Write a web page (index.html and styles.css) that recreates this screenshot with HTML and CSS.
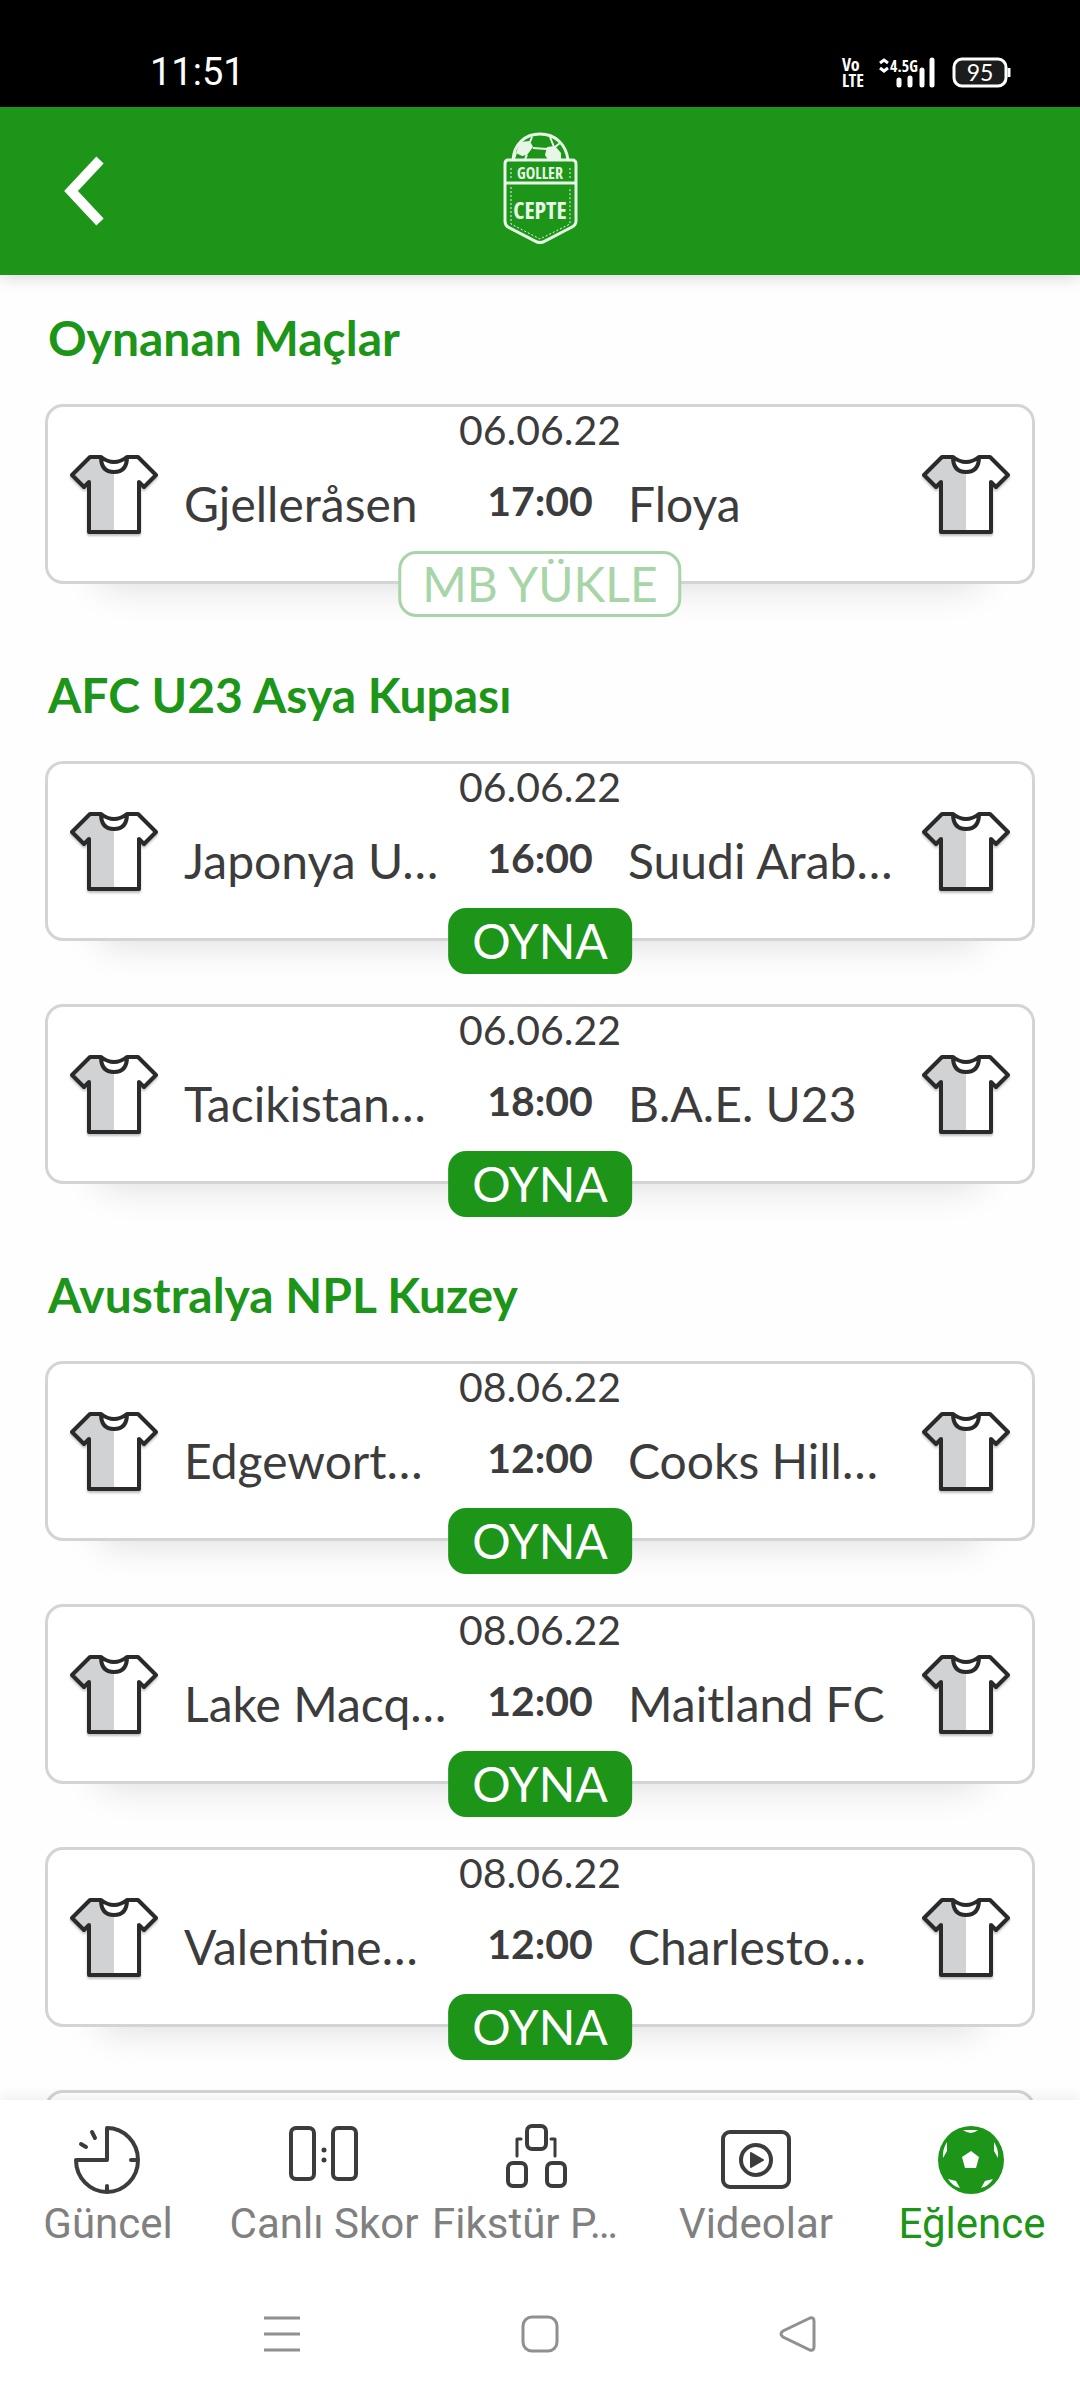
FILE: index.html
```html
<!DOCTYPE html>
<html lang="tr">
  <head>
    <meta charset="UTF-8" />
    <meta name="viewport" content="width=device-width, initial-scale=1.0" />
    <title>Goller Cepte</title>
    <link rel="stylesheet" href="styles.css" />
  </head>

  <body>
    <div class="status-bar">
      <span class="clock">11:51</span>
      <div class="status-icons">
        <span class="volte"><b>Vo</b><b>LTE</b></span>
        <svg class="signal" width="58" height="32" viewBox="0 0 58 32">
          <path d="M2 7 6 4 10 7M2 12 6 15 10 12" fill="none" stroke="#fff" stroke-width="3" />
          <text x="12" y="16" class="signal-text">4.5G</text>
          <path d="M21 24v5M32 22v7M44 14v15M54 4v25" stroke="#fff" stroke-width="5" stroke-linecap="round" />
        </svg>
        <svg class="battery" width="60" height="32" viewBox="0 0 60 32">
          <rect x="3" y="3" width="52" height="27" rx="8" fill="#1c1c1c" stroke="#fff" stroke-width="3" />
          <path d="M58 12v9" stroke="#fff" stroke-width="3" />
          <text x="29" y="25" class="battery-text">95</text>
        </svg>
      </div>
    </div>

    <header>
      <button class="back" aria-label="Geri">
        <svg width="40" height="72" viewBox="0 0 40 72">
          <path d="M36 5 7 36 36 67" fill="none" stroke="#fff" stroke-width="10" />
        </svg>
      </button>
      <svg class="logo" width="76" height="114" viewBox="0 0 76 114">
        <g fill="none" stroke="#e8f6e8" stroke-width="3">
          <path d="M11 29C12 13 23 3 38 3s26 10 28 26" />
          <path d="M6 29h64q4 0 4 4v57q0 4-4 6l-29 15q-3 1-6 0L6 96q-3-2-3-6V33q0-4 3-4zM3 52h70" />
          <path d="M9 37v12M68 37v12M9 56v37l29 15 30-15V56" stroke-width="1" stroke-dasharray="2 2" />
          <path d="M28 11l2-5M48 6l4 10M31 17l14 1M25 24l-2 4M14 22l-2 6M53 16l5-4" stroke-width="2" />
        </g>
        <path d="M18 11 28 10l3 6-6 8-5 1-6-3zM45 16l8-1 6 7v7H46l-3-5z" fill="#e8f6e8" />
        <text x="38" y="48" class="logo-small">GOLLER</text>
        <text x="38" y="88" class="logo-big">CEPTE</text>
      </svg>
    </header>

    <main id="matches"></main>

    <div class="bottom">
      <nav class="tabs">
        <a href="#guncel">
          <svg width="72" height="72" viewBox="0 0 72 72">
            <path d="M35 4A31 32 0 1 1 4 36H35ZM35 68v-6M66 36h-7M20 8l3 6M9 20l5 3" />
          </svg>
          <span>Güncel</span>
        </a>
        <a href="#canli">
          <svg width="72" height="72" viewBox="0 0 72 72">
            <rect x="3" y="4" width="23" height="51" rx="5" />
            <rect x="45" y="4" width="23" height="51" rx="5" />
            <path d="M36 26v0M36 36v0" stroke-width="5" />
          </svg>
          <span>Canlı Skor</span>
        </a>
        <a href="#fikstur">
          <svg width="72" height="72" viewBox="0 0 72 72">
            <rect x="23" y="2" width="19" height="23" rx="5" />
            <rect x="4" y="39" width="18" height="23" rx="5" />
            <rect x="43" y="39" width="18" height="23" rx="5" />
            <path d="M17 15h-4v17M47 15h4v17" stroke-width="3" />
          </svg>
          <span class="long">Fikstür P…</span>
        </a>
        <a href="#videolar">
          <svg width="72" height="72" viewBox="0 0 72 72">
            <rect x="3" y="8" width="66" height="55" rx="7" />
            <circle cx="36" cy="36" r="15" />
            <path d="M31 29v14l12-7z" fill="#3c3c3c" stroke-width="2" />
          </svg>
          <span>Videolar</span>
        </a>
        <a href="#eglence" class="active">
          <svg width="72" height="72" viewBox="0 0 72 72">
            <ellipse cx="35" cy="36" rx="33" ry="34" class="ball" />
            <path
              class="ball-spots"
              d="M35 27l8 6-3 11H29l-3-11zM27 6h15q-7 6-15 0zM11 18v9l-4 7q-1-8 4-16zM58 18v9l4 7q1-8-4-16zM12 55l8 2 4 7q-8-2-12-9zM57 55l-8 2-4 7q8-2 12-9z"
            />
          </svg>
          <span>Eğlence</span>
        </a>
      </nav>
      <div class="system-nav">
        <button aria-label="Son uygulamalar">
          <svg width="40" height="40" viewBox="0 0 40 40"><path d="M2 4h36M2 20h36M2 36h36" /></svg>
        </button>
        <button aria-label="Ana ekran">
          <svg width="40" height="40" viewBox="0 0 40 40"><rect x="3" y="3" width="34" height="34" rx="9" /></svg>
        </button>
        <button aria-label="Geri dön">
          <svg width="40" height="40" viewBox="0 0 40 40"><path d="M32 4 5 17q-4 3 0 6l27 13q4 1 4-3V7q0-4-4-3z" /></svg>
        </button>
      </div>
    </div>

    <script>
      let shirt = `<svg class="shirt" width="92" height="88" viewBox="0 0 92 88">
        <path d="M22 4h11q13 8 26 0h11l18 18-12 12-5-5v50H21V29l-5 5L4 22z" fill="#fff" />
        <path d="M22 4h11q6 4 13 4v71H21V29l-5 5L4 22z" fill="#d1d2d4" />
        <path d="M34 6q0 13 12 13T58 6q-12 6-24 0z" fill="#fff" />
        <path d="M22 4h11q0 15 13 15T59 4h11l18 18-12 12-5-5v50H21V29l-5 5L4 22zM33 4q13 10 26 0" fill="none" stroke="#2a2a2a" stroke-width="4" stroke-linejoin="round" />
      </svg>`;

      let leagues = [
        {
          name: "Oynanan Maçlar",
          matches: [["06.06.22", "17:00", "Gjelleråsen", "Floya", "MB YÜKLE"]],
        },
        {
          name: "AFC U23 Asya Kupası",
          matches: [
            ["06.06.22", "16:00", "Japonya U…", "Suudi Arab…", "OYNA"],
            ["06.06.22", "18:00", "Tacikistan…", "B.A.E. U23", "OYNA"],
          ],
        },
        {
          name: "Avustralya NPL Kuzey",
          matches: [
            ["08.06.22", "12:00", "Edgewort…", "Cooks Hill…", "OYNA"],
            ["08.06.22", "12:00", "Lake Macq…", "Maitland FC", "OYNA"],
            ["08.06.22", "12:00", "Valentine…", "Charlesto…", "OYNA"],
          ],
        },
      ];

      let list = document.querySelector("#matches");
      for (let league of leagues) {
        let section = document.createElement("section");
        section.innerHTML = `<h2>${league.name}</h2>`;
        for (let [date, time, home, away, label] of league.matches) {
          let card = document.createElement("article");
          card.classList.add("match");
          card.innerHTML = `
            <div class="date">${date}</div>
            <div class="teams">
              ${shirt}
              <span class="team">${home}</span>
              <b class="time">${time}</b>
              <span class="team">${away}</span>
              ${shirt}
            </div>
            <button class="play ${label == "OYNA" ? "" : "outline"}">${label}</button>`;
          section.append(card);
        }
        list.append(section);
      }

      let next = document.createElement("article");
      next.classList.add("match");
      list.append(next);
    </script>
  </body>
</html>
```
FILE: styles.css
```css
html,
body {
  margin: 0;
  padding: 0;
  height: 100%;
}

body {
  display: flex;
  flex-flow: column;
  overflow: hidden;
  background-color: #fefefe;
  color: #3c3c3c;
  font-family: Lato, sans-serif;
}

button {
  margin: 0;
  padding: 0;
  border: 0;
  background: none;
  font: inherit;
  color: inherit;
  cursor: pointer;
}

svg {
  display: block;
  flex-shrink: 0;
}

.status-bar {
  box-sizing: border-box;
  height: 107px;
  flex-shrink: 0;
  padding: 37px 69px 0 150px;
  display: flex;
  justify-content: space-between;
  align-items: center;
  background-color: #000;
  color: #fff;
}

.clock {
  font-family: Roboto, sans-serif;
  font-size: 38px;
}

.status-icons {
  display: flex;
  align-items: center;
}

.volte {
  margin-right: 14px;
  display: flex;
  flex-flow: column;
  font: 18px/16px "Open Sans Condensed", "Roboto Condensed", "Liberation Sans Narrow", sans-serif;
}

.signal {
  margin-right: 15px;
}

.signal-text {
  fill: #fff;
  font: 16px "Open Sans Condensed", "Roboto Condensed", "Liberation Sans Narrow", sans-serif;
}

.battery-text {
  fill: #fff;
  font: 23px Lato, sans-serif;
  text-anchor: middle;
}

header {
  height: 168px;
  flex-shrink: 0;
  padding: 0 64px;
  display: grid;
  grid-template-columns: 1fr auto 1fr;
  align-items: center;
  background-color: #1c9518;
  box-shadow: 0 2px 16px rgba(0, 0, 0, 0.16);
  z-index: 1;
}

.back {
  justify-self: start;
}

.logo {
  margin-bottom: 6px;
}

.logo text {
  fill: #e8f6e8;
  font-family: "Open Sans Condensed", "Roboto Condensed", "Liberation Sans Narrow", sans-serif;
  font-weight: 700;
  text-anchor: middle;
}

.logo-small {
  font-size: 16px;
}

.logo-big {
  font-size: 24px;
}

main {
  flex: 1;
  min-height: 0;
  overflow: hidden;
  padding: 15px 45px 0;
}

h2 {
  margin: 0;
  padding: 18px 3px 36px;
  font-size: 48px;
  line-height: 60px;
  color: #1c9518;
}

.match {
  box-sizing: border-box;
  height: 180px;
  margin-bottom: 63px;
  padding: 0 20px;
  border: 3px solid #d4d4d4;
  border-radius: 18px;
  background-color: #fff;
  box-shadow: 0 58px 38px -56px rgba(0, 0, 0, 0.14);
  position: relative;
}

.date {
  height: 46px;
  line-height: 46px;
  font-size: 41px;
  text-align: center;
}

.teams {
  display: grid;
  grid-template-columns: 92px minmax(0, 1fr) 128px minmax(0, 1fr) 92px;
  align-items: center;
}

.shirt {
  filter: drop-shadow(0 2px 1px rgba(0, 0, 0, 0.25));
}

.team {
  padding: 14px 0 0 24px;
  font-size: 48px;
  line-height: 60px;
  overflow: hidden;
  white-space: nowrap;
  text-overflow: ellipsis;
}

.time {
  padding-top: 6px;
  font-size: 41px;
  text-align: center;
}

/* sits on the bottom border of the card */
.play {
  position: absolute;
  left: 50%;
  bottom: -36px;
  transform: translateX(-50%);
  box-sizing: border-box;
  height: 66px;
  padding: 0 24px;
  border-radius: 18px;
  background-color: #1c9518;
  color: #fff;
  font-size: 48px;
  line-height: 60px;
  white-space: nowrap;
}

.play.outline {
  padding: 0 21px;
  border: 3px solid #a8d5a8;
  background-color: #fff;
  color: #a8d5a8;
}

.bottom {
  flex-shrink: 0;
  background-color: #fff;
  box-shadow: 0 -2px 14px rgba(0, 0, 0, 0.08);
  z-index: 1;
}

.tabs {
  padding-top: 24px;
  display: grid;
  grid-template-columns: repeat(5, minmax(0, 1fr));
}

.tabs a {
  display: flex;
  flex-flow: column;
  align-items: center;
  color: #808080;
  font-family: Roboto, sans-serif;
  font-size: 42px;
  line-height: 56px;
  text-decoration: none;
}

.tabs span {
  white-space: nowrap;
}

.tabs .long {
  align-self: flex-start;
}

.tabs svg {
  fill: none;
  stroke: #3c3c3c;
  stroke-width: 4;
  stroke-linecap: round;
  stroke-linejoin: round;
}

.tabs a.active {
  color: #1c9518;
}

.tabs .ball {
  fill: #1c9518;
  stroke: none;
}

.tabs .ball-spots {
  fill: #fff;
  stroke: none;
}

.system-nav {
  padding: 62px 153px 46px;
  display: grid;
  grid-template-columns: repeat(3, 1fr);
  justify-items: center;
}

.system-nav svg {
  fill: none;
  stroke: #909090;
  stroke-width: 3;
}
```
